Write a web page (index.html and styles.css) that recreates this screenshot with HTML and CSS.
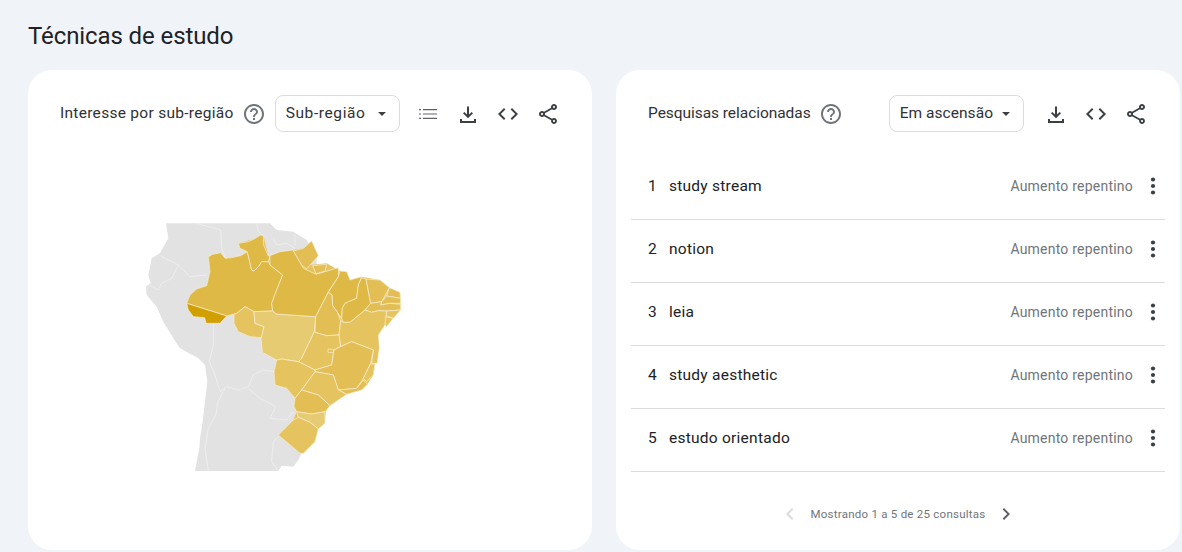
FILE: index.html
```html
<!DOCTYPE html>
<html lang="pt-BR">
<head>
<meta charset="utf-8">
<title>Técnicas de estudo</title>
<link rel="stylesheet" href="styles.css">
</head>
<body>
<svg class="sprite" width="0" height="0" aria-hidden="true">
  <symbol id="i-help" viewBox="0 0 24 24"><path d="M11 18h2v-2h-2v2zm1-16C6.480 2 2 6.480 2 12s4.480 10 10 10 10-4.480 10-10S17.520 2 12 2zm0 18c-4.410 0-8-3.590-8-8s3.590-8 8-8 8 3.590 8 8-3.590 8-8 8zm0-14c-2.210 0-4 1.790-4 4h2c0-1.100.9-2 2-2s2 .9 2 2c0 2-3 1.750-3 5h2c0-2.250 3-2.500 3-5 0-2.210-1.790-4-4-4z"/></symbol>
  <symbol id="i-list" viewBox="0 0 24 24"><path d="M7 7h14v1.200H7zM7 11.400h14v1.200H7zM7 15.800h14V17H7zM3 7h2v1.200H3zM3 11.400h2v1.200H3zM3 15.800h2V17H3z"/></symbol>
  <symbol id="i-download" viewBox="0 0 24 24"><path d="M4 17h2v2h12v-2h2v4H4zM13 4.500v8l2.600-2.600L17 11.300l-5 5-5-5 1.400-1.400 2.600 2.600v-8z"/></symbol>
  <symbol id="i-code" viewBox="0 0 24 24"><path d="M9.400 16.600 4.800 12l4.600-4.600L8 6l-6 6 6 6zm5.200 0 4.600-4.600-4.600-4.600L16 6l6 6-6 6z"/></symbol>
  <symbol id="i-share" viewBox="0 0 24 24"><path d="M18 16.080c-.76 0-1.440.3-1.960.77L8.910 12.700c.05-.23.09-.46.09-.7s-.04-.47-.09-.7l7.050-4.110c.54.5 1.250.81 2.040.81 1.660 0 3-1.340 3-3s-1.340-3-3-3-3 1.340-3 3c0 .24.04.47.09.7L8.040 9.810C7.500 9.310 6.790 9 6 9c-1.660 0-3 1.340-3 3s1.340 3 3 3c.79 0 1.500-.31 2.040-.81l7.120 4.160c-.05.21-.08.43-.08.65 0 1.610 1.310 2.920 2.920 2.920s2.920-1.310 2.920-2.920-1.310-2.920-2.920-2.920zM18 4c.55 0 1 .45 1 1s-.45 1-1 1-1-.45-1-1 .45-1 1-1zM6 13c-.55 0-1-.45-1-1s.45-1 1-1 1 .45 1 1-.45 1-1 1zm12 7.020c-.55 0-1-.45-1-1s.45-1 1-1 1 .45 1 1-.45 1-1 1z"/></symbol>
  <symbol id="i-more" viewBox="0 0 24 24"><circle cx="12" cy="5.500" r="2.100"/><circle cx="12" cy="12" r="2.100"/><circle cx="12" cy="18.500" r="2.100"/></symbol>
  <symbol id="i-left" viewBox="0 0 24 24"><path d="M15.400 7.400 14 6l-6 6 6 6 1.400-1.400L10.800 12z"/></symbol>
  <symbol id="i-right" viewBox="0 0 24 24"><path d="M8.600 16.600 10 18l6-6-6-6-1.400 1.400 4.600 4.600z"/></symbol>
</svg>

<h1 class="page-title">Técnicas de estudo</h1>

<main class="cards">
  <section class="card">
    <header class="card-head">
      <h2 class="card-title title-region">Interesse por sub-região</h2>
      <svg class="ic ic-help"><use href="#i-help"/></svg>
      <div class="select select-region"><span class="select-label">Sub-região</span><span class="caret"></span></div>
      <div class="tools tools-left">
        <svg class="ic ic-soft"><use href="#i-list"/></svg>
        <svg class="ic"><use href="#i-download"/></svg>
        <svg class="ic"><use href="#i-code"/></svg>
        <svg class="ic"><use href="#i-share"/></svg>
      </div>
    </header>
    <div class="map-wrap">
      <svg class="map" viewBox="0 0 870 780" width="290" height="260" role="img" aria-label="Mapa do Brasil">
        <g class="land">
          <path d="M108 25H420L440 45 490 50 530 75 560 130 560 500 540 620 480 650 445 660 515 715 505 735 490 755 455 752 445 768H195L208 700 210 670 218 620 225 560 232 500 225 450 205 430 150 400 130 370 115 345 100 320 80 275 50 240 48 215 62 205 55 180 65 130 90 115 115 70Z"/>
          <path class="b" d="M200 25 235 35 272 45 275 95 285 130M380 25 385 50 400 60M430 70 440 90 470 85 495 100M495 50 495 90M90 122 145 150 180 185 230 180M145 150 125 190 95 205 85 225 60 210M250 325 250 390 238 440 255 480 270 530 290 515 325 525 355 515 370 480 400 465 432 470M355 520 390 550 438 575 420 610 470 615 490 590M285 520 262 565 258 600 235 640 225 700 235 768M445 665 430 680 425 740 445 768"/>
        </g>
        <path class="base" d="M170 265 180 240 200 222 230 212 240 170 235 125 272 113 285 130 332 122 352 110 330 100 325 85 372 72 392 60 400 62 415 123 490 105 520 100 545 78 565 122 540 150 590 145 630 168 650 170 660 195 695 185 750 195 778 218 810 232 812 285 790 310 765 330 745 360 748 400 735 447 730 480 712 508 695 525 650 538 600 572 587 590 585 625 565 642 555 680 520 715 510 715 445 660 490 615 500 590 492 575 495 550 470 520 435 510 432 470 440 435 397 412 395 368 360 365 325 350 312 325 312 298 290 303Z"/>
        <g class="states">
          <path class="c2" d="M235 125 248 118 272 113 285 130 305 128 332 122 352 110 365 165 372 168 385 155 395 140 415 140 420 150 458 180 440 225 425 265 428 288 372 290 345 275 320 295 290 303 250 290 170 265 180 240 200 222 230 212 240 170Z"/>
          <path class="c2" d="M325 85 355 80 372 72 392 60 400 62 400 88 415 123 420 122 415 140 395 140 385 155 372 168 365 165 352 110 330 100Z"/>
          <path class="c1" d="M170 265 250 290 290 303 270 325 228 325 224 308 190 305 175 285Z"/>
          <path class="c4" d="M312 298 320 295 345 275 372 290 375 325 402 335 395 368 360 365 325 350 312 325Z"/>
          <path class="c5" d="M372 290 428 288 440 297 557 305 553 350 515 430 505 440 455 432 440 435 397 412 393 370 402 335 375 325Z"/>
          <path class="c2" d="M420 122 450 110 490 105 520 160 530 165 558 178 585 170 625 158 625 185 595 230 575 270 557 305 440 297 428 288 425 265 440 225 458 180 420 150Z"/>
          <path class="c3" d="M490 108 520 100 545 78 565 122 530 162 515 150Z"/>
          <path class="c3" d="M548 152 590 148 585 168 558 176Z"/>
          <path class="c2" d="M630 168 650 170 660 195 695 185 685 210 680 250 645 265 637 280 635 310 622 292 608 272 606 240 595 232 625 185Z"/>
          <path class="c3" d="M595 232 606 240 608 272 622 292 632 318 627 360 590 362 555 352 557 305 575 270Z"/>
          <path class="c2" d="M695 188 708 192 722 265 705 285 660 322 640 322 635 310 637 280 645 265 680 250 685 210Z"/>
          <path class="c3" d="M708 192 750 195 778 218 755 260 722 265Z"/>
          <path class="c3" d="M778 218 810 232 812 250 770 243Z"/>
          <path class="c3" d="M770 243 812 250 812 265 780 265 752 270 755 260Z"/>
          <path class="c3" d="M722 265 755 260 752 270 780 265 812 268 812 285 770 288 745 287 725 292 705 285Z"/>
          <path class="c4" d="M770 288 812 285 790 310 768 302Z"/>
          <path class="c4" d="M765 305 790 310 770 335 765 330Z"/>
          <path class="c4" d="M640 322 660 322 705 285 725 292 745 287 770 288 768 302 765 330 745 360 748 400 742 445 725 445 730 405 665 380 632 395 627 360 632 318Z"/>
          <path class="c4" d="M555 352 590 362 627 360 632 395 612 405 605 450 555 465 505 440 515 430 553 350Z"/>
          <path class="c3" d="M632 395 665 380 730 405 722 445 700 490 680 520 625 525 610 480 555 470 555 465 605 450 612 405Z"/>
          <path class="c4" d="M725 447 735 447 730 480 710 500 700 490 722 445Z"/>
          <path class="c3" d="M625 525 680 520 700 495 712 508 695 525 650 538Z"/>
          <path class="c4" d="M440 435 455 432 505 440 555 465 555 470 515 525 495 550 470 520 435 510 432 470Z"/>
          <path class="c4" d="M555 470 610 480 625 525 650 538 600 572 565 540 515 525Z"/>
          <path class="c3" d="M515 525 565 540 600 572 585 590 545 597 500 590 492 575 495 550Z"/>
          <path class="c5" d="M500 590 545 597 585 590 585 625 565 642 540 622 505 607Z"/>
          <path class="c4" d="M445 660 490 615 505 607 540 622 565 642 555 680 520 715 510 715Z"/>
          <path class="hole" d="M594 403h16v9h-16z"/>
        </g>
      </svg>
    </div>
  </section>

  <section class="card">
    <header class="card-head">
      <h2 class="card-title title-related">Pesquisas relacionadas</h2>
      <svg class="ic ic-help"><use href="#i-help"/></svg>
      <div class="select select-rising"><span class="select-label">Em ascensão</span><span class="caret"></span></div>
      <div class="tools tools-right">
        <svg class="ic"><use href="#i-download"/></svg>
        <svg class="ic"><use href="#i-code"/></svg>
        <svg class="ic"><use href="#i-share"/></svg>
      </div>
    </header>
    <ol class="rows">
      <li class="row"><span class="num">1</span><span class="term">study stream</span><span class="val">Aumento repentino</span><svg class="more"><use href="#i-more"/></svg></li>
      <li class="row"><span class="num">2</span><span class="term">notion</span><span class="val">Aumento repentino</span><svg class="more"><use href="#i-more"/></svg></li>
      <li class="row"><span class="num">3</span><span class="term">leia</span><span class="val">Aumento repentino</span><svg class="more"><use href="#i-more"/></svg></li>
      <li class="row"><span class="num">4</span><span class="term">study aesthetic</span><span class="val">Aumento repentino</span><svg class="more"><use href="#i-more"/></svg></li>
      <li class="row"><span class="num">5</span><span class="term">estudo orientado</span><span class="val">Aumento repentino</span><svg class="more"><use href="#i-more"/></svg></li>
    </ol>
    <footer class="pager">
      <svg class="pg pg-off"><use href="#i-left"/></svg>
      <span class="pg-text">Mostrando 1 a 5 de 25 consultas</span>
      <svg class="pg"><use href="#i-right"/></svg>
    </footer>
  </section>
</main>
</body>
</html>
```

FILE: styles.css
```css
* { box-sizing: border-box; }
html, body { height: 552px; overflow: hidden; }
body {
  margin: 0;
  background: #f0f4f9;
  color: #202124;
  font-family: Roboto, "Liberation Sans", sans-serif;
}
.sprite { display: block; height: 0; }
.page-title {
  margin: 0;
  padding: 21px 0 0 28px;
  height: 70px;
  font-size: 24px;
  line-height: 30px;
  font-weight: 400;
  letter-spacing: -.1px;
}
.cards {
  display: grid;
  grid-template-columns: 564px 564px;
  gap: 24px;
  padding-left: 28px;
}
.card {
  height: 480px;
  background: #fff;
  border-radius: 24px;
}
.card-head {
  display: flex;
  align-items: center;
  height: 37px;
  margin-top: 25px;
  padding-left: 32px;
}
.card-title {
  margin: 0 0 2px;
  font-size: 15.5px;
  font-weight: 400;
  color: #303134;
  white-space: nowrap;
}
.title-region { letter-spacing: .29px; }
.title-related { letter-spacing: -.05px; }
.ic {
  display: block;
  width: 24px;
  height: 24px;
  fill: #3c4043;
  flex: none;
}
.ic-help { margin-left: 8px; fill: #70757a; }
.ic-soft { fill: #5f6368; }
.select {
  display: flex;
  align-items: center;
  justify-content: space-between;
  height: 37px;
  padding: 0 13px 0 10px;
  border: 1px solid #dadce0;
  border-radius: 8px;
  font-size: 15.5px;
  color: #303134;
}
.select-label { margin-bottom: 2px; }
.select-region { width: 125px; margin-left: 9px; letter-spacing: .6px; }
.select-rising { width: 135px; margin-left: 46px; letter-spacing: .05px; }
.caret {
  width: 0;
  height: 0;
  border-left: 4px solid transparent;
  border-right: 4px solid transparent;
  border-top: 4px solid #3c4043;
}
.tools { display: flex; gap: 16px; }
.tools-left { margin-left: 16px; }
.tools-right { margin-left: 20px; }
.map-wrap { padding: 83px 0 0 102px; }
.map { display: block; }
.land path { fill: #e2e2e2; }
.land .b { fill: none; stroke: #f3f3f3; stroke-width: 2; }
.base { fill: #e5c460; }
.states path { stroke: #f8f1dc; stroke-width: 2; stroke-linejoin: round; }
.states .hole { fill: #e2be54; }
.c1 { fill: #d19f00; }
.c2 { fill: #dfb945; }
.c3 { fill: #e2be54; }
.c4 { fill: #e5c460; }
.c5 { fill: #e7cb72; }
.rows {
  list-style: none;
  margin: 25px 15px 0;
  padding: 0;
}
.row {
  display: flex;
  align-items: center;
  height: 63px;
  border-bottom: 1px solid #dadce0;
  padding: 0 0 4px 17px;
  font-size: 15.5px;
  color: #202124;
}
.num { width: 21px; }
.term { flex: 1; letter-spacing: .25px; }
.val { font-size: 14px; letter-spacing: .22px; color: #70757a; }
.more { width: 24px; height: 24px; margin-left: 8px; fill: #3c4043; }
.pager {
  display: flex;
  align-items: center;
  justify-content: center;
  height: 24px;
  margin-top: 30px;
  gap: 8px;
}
.pg { width: 24px; height: 24px; fill: #5f6368; }
.pg-off { fill: #dadce0; }
.pg-text { font-size: 11.5px; letter-spacing: .25px; color: #70757a; }
```
